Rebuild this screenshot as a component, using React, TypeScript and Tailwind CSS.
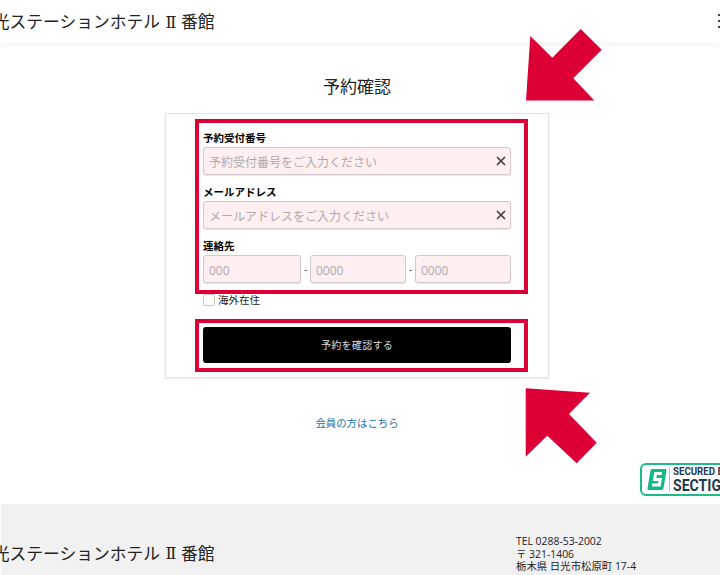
import { X } from "lucide-react";

const fontStack = "font-['Open_Sans','Noto_Sans_CJK_JP',sans-serif]";

function Arrow({ points }: { points: string }) {
  return (
    <svg
      className="pointer-events-none absolute left-0 top-0"
      width="720"
      height="575"
      viewBox="0 0 720 575"
    >
      <polygon points={points} fill="#dc0037" />
    </svg>
  );
}

function HotelName({ className }: { className: string }) {
  return (
    <span className={`flex items-center whitespace-nowrap text-[16.75px] font-normal leading-none text-[#222] ${className}`}>
      日光ステーションホテル
      <span className="ml-[5px] mr-[4px] w-[12px] text-center font-['DejaVu_Serif',serif] text-[16px] font-normal">Ⅱ</span>
      番館
    </span>
  );
}

function ClearableField({ label, placeholder }: { label: string; placeholder: string }) {
  return (
    <div>
      <label className="flex h-[24px] items-end pb-[2px] text-[10.5px] font-bold leading-[14px] text-black">
        {label}
      </label>
      <div className="relative">
        <input
          readOnly
          placeholder={placeholder}
          className="h-[28px] w-full rounded-[3px] border border-[#cfc9ca] bg-[#ffeff1] px-[5px] pt-[2px] text-[12px] shadow-[0_1px_1px_rgba(0,0,0,0.1)] placeholder:text-[#aeaaab]"
        />
        <X
          className="absolute right-[3px] top-[7px] text-[#444]"
          size={14}
          strokeWidth={3}
        />
      </div>
    </div>
  );
}

function PhoneInput({ placeholder, width }: { placeholder: string; width: string }) {
  return (
    <input
      readOnly
      placeholder={placeholder}
      className={`h-[28px] ${width} rounded-[3px] border border-[#cfc9ca] bg-[#ffeff1] px-[5px] pt-[2px] text-[12px] shadow-[0_1px_1px_rgba(0,0,0,0.1)] placeholder:text-[#aeaaab]`}
    />
  );
}

function SectigoBadge() {
  return (
    <div className="absolute left-[640px] top-[463px] flex h-[33px] w-[120px] items-center rounded-[6px] border-2 border-[#1fb98b] bg-white pl-[5px]">
      <svg width="20" height="23" viewBox="0 0 20 23">
        <path d="M5 1h13a1.5 1.5 0 0 1 1.5 1.8l-3 17.4A2.2 2.2 0 0 1 14.3 22H2a1.5 1.5 0 0 1-1.5-1.8l3-17.4A2 2 0 0 1 5 1z" fill="#12b886" />
        <path d="M15 5.5H8.6L7.6 11.5h5.6l-0.9 5.5H5" fill="none" stroke="#fff" strokeWidth="3" />
      </svg>
      <div className="ml-[2px] h-[24px] w-px bg-[#9ccfc0]" />
      <div className="ml-[3px] flex origin-left scale-x-[0.88] flex-col whitespace-nowrap font-['Roboto',sans-serif] font-bold text-[#1d3b50]">
        <span className="text-[11px] leading-[12px]">SECURED BY</span>
        <span className="text-[16px] leading-[16px]">SECTIGO</span>
      </div>
    </div>
  );
}

export default function App() {
  return (
    <div className={`relative h-[575px] w-[720px] overflow-hidden bg-white ${fontStack}`}>
      <header className="flex h-[43px] items-center justify-between overflow-hidden bg-white shadow-[0_1px_6px_rgba(0,0,0,0.08)]">
        <HotelName className="-ml-[24px] translate-y-px" />
        <div className="flex -translate-y-px flex-col gap-[4px]">
          <span className="h-[2px] w-[2px] bg-[#444]" />
          <span className="h-[2px] w-[2px] bg-[#444]" />
          <span className="h-[2px] w-[2px] bg-[#444]" />
        </div>
      </header>

      <main className="flex w-[714px] flex-col items-center">
        <h1 className="mt-[32px] h-[38px] text-[17px] font-normal leading-[24px] text-[#222]">
          予約確認
        </h1>

        <div className="flex h-[265px] w-[384px] flex-col border border-[#e4e4e4] bg-white pl-[29px] pt-[5px] shadow-[0_1px_2px_rgba(0,0,0,0.1)]">
          <section className="h-[175px] w-[333px] border-4 border-[#dc0037] pl-[4px] pr-[13px]">
            <ClearableField label="予約受付番号" placeholder="予約受付番号をご入力ください" />
            <div className="h-[2px]" />
            <ClearableField label="メールアドレス" placeholder="メールアドレスをご入力ください" />
            <div className="h-[2px]" />
            <label className="flex h-[24px] items-end pb-[2px] text-[10.5px] font-bold leading-[14px] text-black">
              連絡先
            </label>
            <div className="flex items-center justify-between text-[10px] text-[#444]">
              <PhoneInput placeholder="000" width="w-[98px]" />
              <span>-</span>
              <PhoneInput placeholder="0000" width="w-[96px]" />
              <span>-</span>
              <PhoneInput placeholder="0000" width="w-[96px]" />
            </div>
          </section>

          <label className="ml-[8px] flex h-[25px] items-start gap-[3px] text-[10.5px] leading-[13px] text-[#222]">
            <span className="h-[12px] w-[12px] rounded-[2px] border border-[#c4c4c4] bg-white" />
            海外在住
          </label>

          <section className="h-[53px] w-[333px] border-4 border-[#dc0037] pl-[4px] pr-[13px] pt-[4px]">
            <button className="h-[36px] w-full rounded-[3px] bg-black pt-px text-[10px] tracking-[0.03em] text-[#ddd]">
              予約を確認する
            </button>
          </section>
        </div>

        <a className="mt-[37px] h-[89px] text-[10.4px] leading-[16px] text-[#1a73a8]">
          会員の方はこちら
        </a>
      </main>

      <footer className="ml-px flex h-[71px] items-start justify-between bg-[#f1f1f1]">
        <HotelName className="-ml-[25px] mt-[42px]" />
        <address className="mr-[84px] mt-[31px] w-[120px] whitespace-nowrap text-[10.4px] not-italic leading-[12.5px] text-[#222]">
          <div>TEL 0288-53-2002</div>
          <div>〒 321-1406</div>
          <div>栃木県 日光市松原町 17-4</div>
        </address>
      </footer>

      <Arrow points="530.3,36 552.3,57.7 580.7,29 601.7,49.7 573.3,78.3 594.3,100.5 526,100.5" />
      <Arrow points="525.7,388.3 590,392.7 569,414 596.7,442.7 576.7,463.3 547.3,435.7 525.7,456.7" />
      <SectigoBadge />
    </div>
  );
}
